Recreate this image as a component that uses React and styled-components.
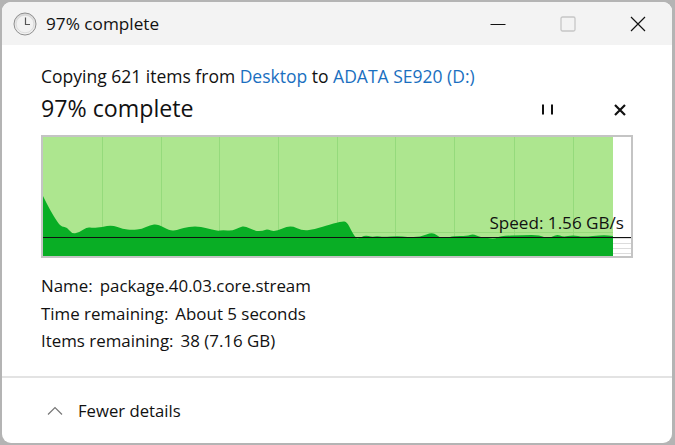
import React from "react";
import styled, { createGlobalStyle } from "styled-components";

const Global = createGlobalStyle`
  html, body { margin: 0; padding: 0; background: #b4b4b4; overflow: hidden; }
  #root { width: 675px; height: 445px; }
`;

const Page = styled.div`
  width: 675px;
  height: 445px;
  padding: 2px 3px 2px 2px;
  box-sizing: border-box;
  font-family: "Open Sans", "Noto Sans", sans-serif;
  color: #111;
`;

const Win = styled.div`
  height: 100%;
  background: #fff;
  border-radius: 9px;
  overflow: hidden;
  display: flex;
  flex-direction: column;
`;

const TitleBar = styled.div`
  height: 43px;
  flex: none;
  background: #f3f3f3;
  display: flex;
  align-items: center;
  padding-left: 11px;
`;

const TitleText = styled.span`
  margin-left: 9px;
  font-size: 17.2px;
  flex: 1;
`;

const WinBtn = styled.div`
  width: ${(p) => p.$w}px;
  height: 43px;
  display: flex;
  align-items: center;
  justify-content: center;
`;

const Body = styled.div`
  flex: 1;
  padding: 20px 39px 0 39px;
  display: flex;
  flex-direction: column;
`;

const CopyLine = styled.div`
  font-size: 17.5px;
  line-height: 22px;
  white-space: pre;
`;

const Link = styled.span`
  color: #1a6fc0;
`;

const HeadRow = styled.div`
  display: flex;
  align-items: center;
  height: 32px;
  margin-top: 5px;
`;

const Heading = styled.div`
  font-size: 23.2px;
  flex: 1;
`;

const Controls = styled.div`
  display: flex;
  align-items: center;
  gap: 61px;
  margin-right: 7px;
  margin-top: 3px;
`;

const Chart = styled.div`
  position: relative;
  width: 592px;
  height: 123px;
  margin-top: 11px;
  box-sizing: border-box;
  border: 2px solid #c4c4c4;
  background: #fff;
`;

const Speed = styled.span`
  position: absolute;
  right: 7px;
  top: 76px;
  font-size: 17.1px;
  line-height: 20px;
  color: #111;
  white-space: nowrap;
`;

const Details = styled.div`
  margin-top: 14px;
  display: flex;
  flex-direction: column;
`;

const DetailRow = styled.div`
  display: flex;
  gap: 7px;
  font-size: 16.9px;
  line-height: 27.5px;
`;

const Footer = styled.div`
  flex: none;
  height: 67px;
  border-top: 2px solid #e3e3e3;
  box-sizing: border-box;
  display: flex;
  align-items: center;
  padding-left: 45px;
  gap: 15px;
  font-size: 16.7px;
`;

const profile = [
  [43,196],[50,210],[58,223],[62,227],[67,227],[72,234],[80,232],[87,227],[93,228],[102,227],[112,225],[123,229],[132,230],[142,229],[150,225],[158,224],[170,231],[177,230],[183,228],[195,226],[207,228],[217,231],[223,230],[232,231],[240,227],[245,226],[255,231],[263,231],[267,229],[275,232],[290,225],[303,231],[315,229],[325,226],[342,221],[347,222],[351,230],[355,237],[358,239],[365,235],[372,237],[377,236],[383,237],[398,236],[407,237],[420,237],[433,232],[440,238],[447,238],[453,236],[467,236],[473,234],[480,237],[495,239],[500,236],[523,235],[540,235],[548,239],[557,234],[563,237],[573,235],[583,237],[603,235],[613,236],
];
const OX = 43, OY = 137, H = 119, W = 588, END = 613 - OX;
const pts = profile.map(([x, y]) => [x - OX, y - OY]);
const smooth = pts
  .slice(1)
  .map((p, i) => {
    const prev = pts[i];
    return `Q${prev[0]} ${prev[1]} ${(prev[0] + p[0]) / 2} ${(prev[1] + p[1]) / 2}`;
  })
  .join(" ");
const area = `M0 ${H} L0 ${pts[0][1]} ${smooth} L${END} ${pts[pts.length - 1][1]} L${END} ${H} Z`;
const vLines = [102,161,219,278,337,395,454,514,573].map((x) => x - OX);

const Graph = () => (
  <svg width={W} height={H} style={{ display: "block" }} viewBox={`0 0 ${W} ${H}`}>
    {[101, 106, 111, 116].map((y) => (
      <line key={y} x1={END} x2={W} y1={y + 0.5} y2={y + 0.5} stroke="#dcdcdc" />
    ))}
    <rect x="0" y="0" width={END} height={H} fill="#ade68f" />
    {vLines.map((x) => (
      <line key={x} x1={x + 0.5} x2={x + 0.5} y1="0" y2={H} stroke="#95da7c" />
    ))}
    <line x1="300" x2={END} y1="95.5" y2="95.5" stroke="#95da7c" />
    <path d={area} fill="#09ae25" />
    <line x1="0" x2={W} y1="100.5" y2="100.5" stroke="#111" />
  </svg>
);

const ClockIcon = () => (
  <svg width="24" height="24" viewBox="0 0 24 24">
    <defs>
      <linearGradient id="rim" x1="0" y1="0" x2="0" y2="1">
        <stop offset="0" stopColor="#d8d8d8" />
        <stop offset="1" stopColor="#f4f4f4" />
      </linearGradient>
    </defs>
    <circle cx="12" cy="12" r="11" fill="url(#rim)" stroke="#8e8e8e" />
    <circle cx="12" cy="12" r="8.8" fill="#f2f2f2" stroke="#d0d0d0" strokeWidth="0.6" />
    <path d="M12.5 5.5V12.5H17" fill="none" stroke="#555" strokeWidth="1.2" />
  </svg>
);

export default function App() {
  return (
    <Page>
      <Global />
      <Win>
        <TitleBar>
          <ClockIcon />
          <TitleText>97% complete</TitleText>
          <WinBtn $w={68}>
            <svg width="16" height="16" viewBox="0 0 16 16"><path d="M0.5 8.5H15.5" stroke="#111" strokeWidth="1" /></svg>
          </WinBtn>
          <WinBtn $w={72}>
            <svg width="16" height="16" viewBox="0 0 16 16"><rect x="1" y="1" width="14" height="14" rx="1.5" fill="none" stroke="#c6c6c6" strokeWidth="1.3" /></svg>
          </WinBtn>
          <WinBtn $w={68}>
            <svg width="16" height="16" viewBox="0 0 16 16"><path d="M1 1L15 15M15 1L1 15" stroke="#111" strokeWidth="1.2" /></svg>
          </WinBtn>
        </TitleBar>
        <Body>
          <CopyLine>Copying 621 items from <Link>Desktop</Link> to <Link>ADATA SE920 (D:)</Link></CopyLine>
          <HeadRow>
            <Heading>97% complete</Heading>
            <Controls>
              <svg width="11" height="11" viewBox="0 0 11 11"><path d="M1 0.5V10.5M10 0.5V10.5" stroke="#111" strokeWidth="2" /></svg>
              <svg width="12" height="12" viewBox="0 0 12 12"><path d="M1 1L11 11M11 1L1 11" stroke="#111" strokeWidth="2.2" /></svg>
            </Controls>
          </HeadRow>
          <Chart>
            <Graph />
            <Speed>Speed: 1.56 GB/s</Speed>
          </Chart>
          <Details>
            <DetailRow><span>Name:</span><span>package.40.03.core.stream</span></DetailRow>
            <DetailRow><span>Time remaining:</span><span>About 5 seconds</span></DetailRow>
            <DetailRow><span>Items remaining:</span><span>38 (7.16 GB)</span></DetailRow>
          </Details>
        </Body>
        <Footer>
          <svg width="16" height="10" viewBox="0 0 16 10"><path d="M1 8.5L8 1.5L15 8.5" fill="none" stroke="#777" strokeWidth="1.2" /></svg>
          <span>Fewer details</span>
        </Footer>
      </Win>
    </Page>
  );
}
